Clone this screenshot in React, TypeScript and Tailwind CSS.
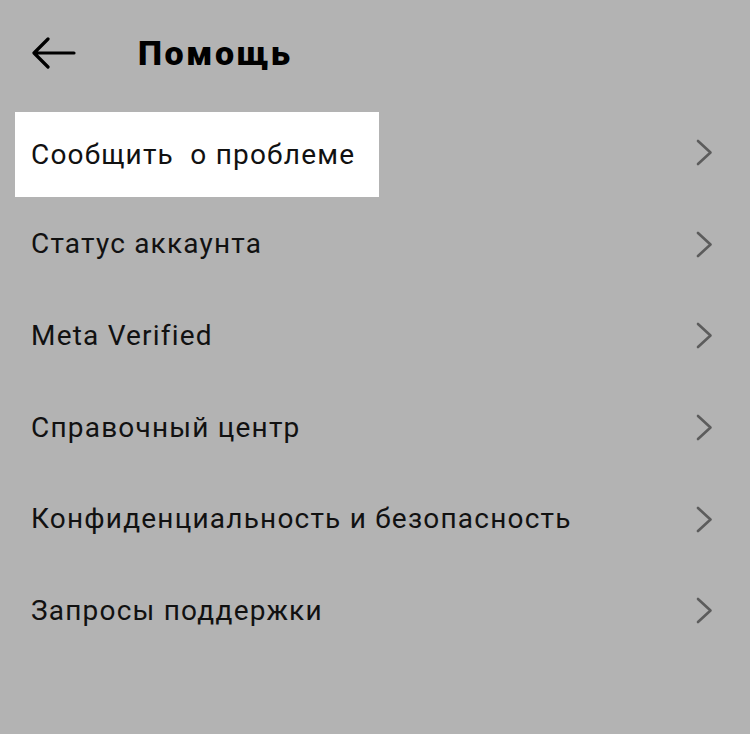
import { useState } from "react";

const items = [
  "Сообщить  о проблеме",
  "Статус аккаунта",
  "Meta Verified",
  "Справочный центр",
  "Конфиденциальность и безопасность",
  "Запросы поддержки",
];

const BackArrow = () => (
  <svg width="44" height="32" viewBox="0 0 44 32" fill="none">
    <path
      d="M42 16H3M16 2L2 16l14 14"
      stroke="#000"
      strokeWidth="3.2"
      strokeLinecap="round"
      strokeLinejoin="round"
    />
  </svg>
);

const Chevron = () => (
  <svg width="17" height="27" viewBox="0 0 17 27" fill="none">
    <path
      d="M2 2l12.5 11.5L2 25"
      stroke="#5c5c5c"
      strokeWidth="2.6"
      strokeLinecap="round"
      strokeLinejoin="round"
    />
  </svg>
);

export default function App() {
  const [active] = useState(0);

  return (
    <div
      className="w-[750px] h-[734px] bg-[#b3b3b3] text-[#111] overflow-hidden"
      style={{ fontFamily: "Roboto, 'Noto Sans', sans-serif" }}
    >
      <header className="h-[107px] flex items-center pl-[32px] pb-[2px]">
        <BackArrow />
        <h1 className="ml-[62px] text-[34px] font-black tracking-[2.6px] text-black leading-none">Помощь</h1>
      </header>
      <ul className="flex flex-col">
        {items.map((label, i) => (
          <li key={label} className="h-[91.6px] flex items-center justify-between pl-[31px] pr-[37px]">
            {i === active ? (
              <span className="-ml-[16px] mt-[4px] pl-[16px] pr-[24px] h-[85px] flex items-center bg-white text-[28px] tracking-[1.2px] whitespace-pre">
                {label}
              </span>
            ) : (
              <span className="text-[28px] tracking-[1.2px] whitespace-pre">{label}</span>
            )}
            <Chevron />
          </li>
        ))}
      </ul>
    </div>
  );
}
